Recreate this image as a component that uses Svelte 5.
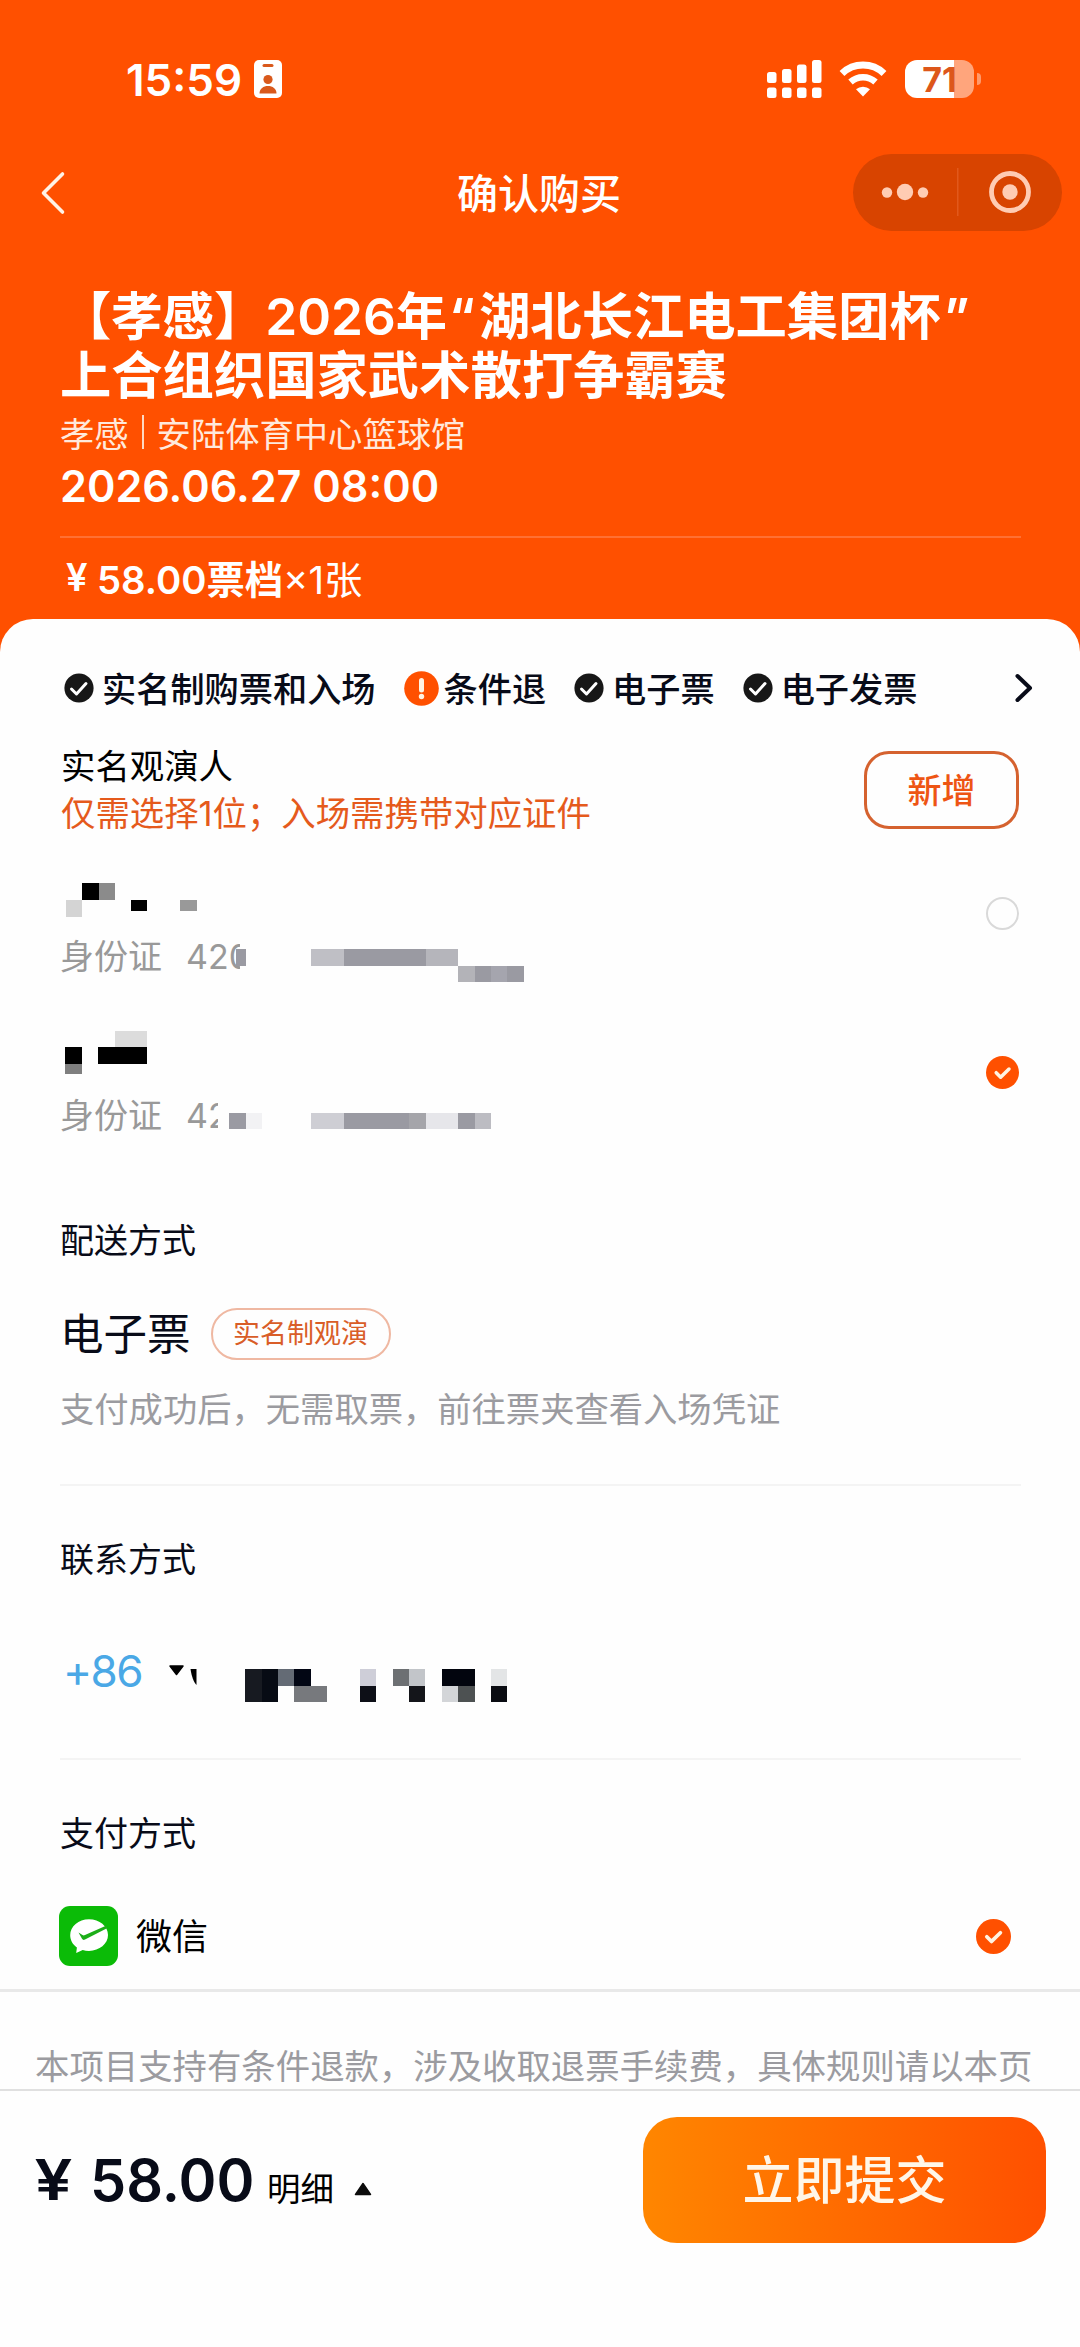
<script>
    const badges = [
        {text: '实名制购票和入场', warn: false},
        {text: '条件退', warn: true},
        {text: '电子票', warn: false},
        {text: '电子发票', warn: false}
    ]

    // mask blocks: [x, y, width, height, color], relative to their own row
    const people = [
        {
            number: '420',
            mask: [
                [22, 46, 17, 17, '#000'], [39, 46, 16, 17, '#8b8b8b'], [6, 63, 16, 17, '#d4d4d4'],
                [71, 63, 16, 11, '#000'], [120, 63, 17, 11, '#999'],
                [180, 100, 30, 38, '#fefefe'], [176, 112, 10, 17, '#9a9aa2'],
                [251, 112, 33, 17, '#bfbfc5'], [284, 112, 82, 17, '#9a9aa2'], [366, 112, 32, 17, '#b5b5bb'],
                [398, 129, 17, 16, '#b3b3b8'], [415, 129, 16, 16, '#9a9aa2'], [431, 129, 16, 16, '#a5a5ae'], [447, 129, 17, 16, '#9a9aa2']
            ]
        },
        {
            number: '42',
            mask: [
                [55, 35, 32, 16, '#dcdcdc'], [5, 51, 17, 17, '#000'], [38, 51, 49, 17, '#000'], [5, 68, 17, 10, '#7f7f7f'],
                [155, 112, 10, 11, '#fefefe'], [158, 100, 20, 38, '#fefefe'],
                [169, 117, 17, 16, '#9a9aa2'], [186, 117, 16, 16, '#f2f2f4'],
                [251, 117, 33, 16, '#ceced4'], [284, 117, 65, 16, '#9a9aa2'], [349, 117, 17, 16, '#a5a5aa'],
                [366, 117, 32, 16, '#e6e6ea'], [398, 117, 17, 16, '#9a9aa2'], [415, 117, 16, 16, '#bcbcc2']
            ]
        }
    ]

    const phoneMask = [
        [0, 0, 17, 33, '#171a21'], [17, 0, 16, 33, '#070b14'], [33, 0, 16, 17, '#646b75'], [49, 0, 17, 17, '#020614'], [49, 17, 33, 16, '#77797d'],
        [115, 0, 16, 17, '#ceced8'], [115, 17, 16, 16, '#0d0f17'],
        [148, 0, 16, 17, '#6d7073'], [164, 0, 16, 17, '#c2c5c9'], [164, 17, 16, 16, '#14151a'],
        [197, 0, 33, 17, '#02050e'], [197, 17, 16, 16, '#d3d5d8'], [213, 17, 17, 16, '#4d5152'],
        [246, 0, 16, 17, '#e3e5e6'], [246, 17, 16, 16, '#0a0c12']
    ]

    let selected = $state(1)
</script>

{#snippet check(size)}
    <svg width={size} height={size} viewBox="0 0 34 34">
        <circle cx="17" cy="17" r="17" fill="#ff5000" />
        <path d="M10.500 17.200l4.600 4.600 8.600-8.400" fill="none" stroke="#fff3e2" stroke-width="3.600" stroke-linecap="round" stroke-linejoin="round" />
    </svg>
{/snippet}

<main>
    <header>
        <div class="status">
            <span class="time">15:59</span>
            <svg class="idcard" width="28" height="38" viewBox="0 0 28 38">
                <rect width="28" height="38" rx="5" fill="#fff" />
                <rect x="8.500" y="4" width="11" height="3" rx="1.500" fill="#d9591c" />
                <circle cx="14" cy="19.500" r="4.600" fill="#d9591c" />
                <path d="M5.500 33.500c0-5 4-7.500 8.500-7.500s8.500 2.500 8.500 7.500z" fill="#d9591c" />
            </svg>
            <svg class="signal" width="55" height="38" viewBox="0 0 55 38" fill="#fff">
                <rect x="0" y="12" width="9.500" height="11" rx="2.500" />
                <rect x="15" y="9" width="9.500" height="14" rx="2.500" />
                <rect x="30" y="4.500" width="9.500" height="18.500" rx="2.500" />
                <rect x="45" y="0" width="9.500" height="23" rx="2.500" />
                <rect x="0" y="27.500" width="9.500" height="10.500" rx="2.500" />
                <rect x="15" y="27.500" width="9.500" height="10.500" rx="2.500" />
                <rect x="30" y="27.500" width="9.500" height="10.500" rx="2.500" />
                <rect x="45" y="27.500" width="9.500" height="10.500" rx="2.500" />
            </svg>
            <svg class="wifi" width="48" height="36" viewBox="0 0 48 36">
                <path d="M3 12.500a30.500 30.500 0 0 1 42 0" fill="none" stroke="#fff" stroke-width="7" />
                <path d="M11.500 21a18.500 18.500 0 0 1 25 0" fill="none" stroke="#fff" stroke-width="6.500" />
                <path d="M24 35.500l-7-7.200a10.500 10.500 0 0 1 14 0z" fill="#fff" />
            </svg>
            <div class="battery"><span>71</span></div>
            <i class="cap"></i>
        </div>

        <nav>
            <svg class="back" width="26" height="44" viewBox="0 0 26 44">
                <path d="M22.500 3L3.500 22l19 19" fill="none" stroke="#fff3e6" stroke-width="3.600" stroke-linecap="round" stroke-linejoin="round" />
            </svg>
            <h1>确认购买</h1>
            <div class="capsule">
                <svg width="209" height="77" viewBox="0 0 209 77" fill="#ffccb3">
                    <circle cx="34" cy="38.500" r="5.200" />
                    <circle cx="52" cy="38" r="8.200" />
                    <circle cx="70" cy="38.500" r="5.200" />
                    <rect x="104" y="14" width="1.500" height="48" fill="#e2591c" />
                    <circle cx="157" cy="38" r="18.500" fill="none" stroke="#ffccb3" stroke-width="4.800" />
                    <circle cx="157" cy="38" r="7.700" />
                </svg>
            </div>
        </nav>

        <div class="event">
            <h2>【孝感】2026年<q>湖北长江电工集团杯</q><br>上合组织国家武术散打争霸赛</h2>
            <p class="venue">孝感 <i></i> 安陆体育中心篮球馆</p>
            <p class="date">2026.06.27 08:00</p>
            <p class="tier"><span class="yen">¥</span><b>58.00票档</b><span>×1张</span></p>
        </div>
    </header>

    <div class="sheet">
        <div class="badges">
            {#each badges as badge}
                <div class="badge" class:warn={badge.warn}>
                    {#if badge.warn}
                        <svg width="35" height="35" viewBox="0 0 35 35">
                            <circle cx="17.500" cy="17.500" r="17.300" fill="#ff5000" />
                            <path d="M17.500 9.500v9.500" stroke="#fff3e2" stroke-width="5" stroke-linecap="round" />
                            <circle cx="17.500" cy="25.500" r="2.700" fill="#fff3e2" />
                        </svg>
                    {:else}
                        <svg width="30" height="30" viewBox="0 0 30 30">
                            <circle cx="15" cy="15" r="14.600" fill="#171717" />
                            <path d="M7.500 16l5 5 9.500-10.500" fill="none" stroke="#fff" stroke-width="3" stroke-linecap="round" stroke-linejoin="round" />
                        </svg>
                    {/if}
                    <span>{badge.text}</span>
                </div>
            {/each}
            <svg class="more" width="18" height="30" viewBox="0 0 18 30">
                <path d="M2.500 3L15 15 2.500 27" fill="none" stroke="#080b18" stroke-width="4" stroke-linecap="round" stroke-linejoin="round" />
            </svg>
        </div>

        <div class="viewer">
            <div>
                <h3>实名观演人</h3>
                <p>仅需选择1位；入场需携带对应证件</p>
            </div>
            <button class="add">新增</button>
        </div>

        {#each people as person, i}
            <div class="person">
                <div class="idline">身份证<span>{person.number}</span></div>
                <svg class="mask" width="480" height="159" viewBox="0 0 480 159" shape-rendering="crispEdges">
                    {#each person.mask as [x, y, w, h, color]}
                        <rect {x} {y} width={w} height={h} fill={color} />
                    {/each}
                </svg>
                <button class="radio" aria-label="选择" onclick={() => selected = i}>
                    {#if selected === i}
                        {@render check(33)}
                    {:else}
                        <i></i>
                    {/if}
                </button>
            </div>
        {/each}

        <section class="delivery">
            <h3>配送方式</h3>
            <div class="ticket">
                <strong>电子票</strong>
                <span class="tag">实名制观演</span>
            </div>
            <p>支付成功后，无需取票，前往票夹查看入场凭证</p>
        </section>

        <section class="contact">
            <h3>联系方式</h3>
            <div class="phone">
                <span>+86</span>
                <svg class="drop" width="30" height="22" viewBox="0 0 30 22">
                    <path d="M2 2h13l-6.500 8.500z" stroke="#000" stroke-width="1.500" stroke-linejoin="round" />
                    <path d="M22.500 5h6v16c-3-3-5-9-6-16z" />
                </svg>
                <svg class="digits" width="262" height="33" viewBox="0 0 262 33" shape-rendering="crispEdges">
                    {#each phoneMask as [x, y, w, h, color]}
                        <rect {x} {y} width={w} height={h} fill={color} />
                    {/each}
                </svg>
            </div>
        </section>

        <section class="payment">
            <h3>支付方式</h3>
            <div class="wechat">
                <svg width="59" height="60" viewBox="0 0 59 60">
                    <rect width="59" height="60" rx="11" fill="#0bbb07" />
                    <path d="M30 13.300c-10.500 0-18.800 7-18.800 16 0 5 2.600 9.300 6.700 12.200l-.7 5.500 6.500-3c2 .6 4 .9 6.300.9 10.500 0 19-7 19-15.800s-8.500-15.800-19-15.800z" fill="#fff" />
                    <path d="M19.500 26.500l4 2.500c1 .6 1.500.5 2.500 0L47.500 19.500 48.500 22 26 33.500c-1.200.7-2.300.5-3-.7z" fill="#1cae18" />
                </svg>
                <span>微信</span>
                {@render check(35)}
            </div>
        </section>

        <div class="notice">本项目支持有条件退款，涉及收取退票手续费，具体规则请以本页</div>

        <footer>
            <span class="sign">¥</span>
            <span class="total">58.00</span>
            <span class="detail">明细</span>
            <svg width="18" height="14" viewBox="0 0 18 14">
                <path d="M9 1.500L16.500 12.500h-15z" fill="#0c0c0c" stroke="#0c0c0c" stroke-width="1.500" stroke-linejoin="round" />
            </svg>
            <button>立即提交</button>
        </footer>
    </div>
</main>

<style>
    :global(body) {
        margin: 0;
    }

    main {
        display: flex;
        flex-direction: column;
        width: 1080px;
        height: 2347px;
        overflow: hidden;
        background: #ff5000;
        font-family: Inter, 'Noto Sans CJK SC', sans-serif;
        color: #080b18;
    }

    h1, h2, h3, p {
        margin: 0;
        font-weight: 400;
    }

    svg {
        display: block;
        flex: none;
    }

    button {
        padding: 0;
        border: 0;
        background: none;
        font-family: inherit;
    }

    header {
        height: 619px;
        color: #fff;
    }

    .status {
        display: flex;
        align-items: center;
        height: 118px;
        padding: 20px 0 0 126px;
    }

    .time {
        width: 128px;
        padding-top: 2px;
        font-size: 44px;
        font-weight: 600;
    }

    .signal {
        margin-left: 485px;
    }

    .wifi {
        margin-left: 17px;
    }

    .battery {
        width: 69px;
        height: 38px;
        margin-left: 18px;
        border-radius: 12px;
        background: linear-gradient(90deg, #fff 49px, #ffa57c 49px);
        color: #dd571a;
        font-size: 34px;
        font-weight: 700;
        line-height: 39px;
        text-align: center;
    }

    .cap {
        width: 4px;
        height: 12px;
        margin-left: 3px;
        border-radius: 0 6px 6px 0;
        background: #ff9a6c;
    }

    nav {
        display: flex;
        align-items: center;
        height: 109px;
        padding: 0 18px 1px 40px;
    }

    h1 {
        margin-left: 391px;
        padding-bottom: 4px;
        font-size: 41px;
        font-weight: 500;
    }

    .capsule {
        margin-left: auto;
        border-radius: 39px;
        background: #d84400;
    }

    .event {
        padding: 39px 59px 0 60px;
    }

    h2 {
        font-size: 51.3px;
        font-weight: 600;
        line-height: 59px;
        white-space: nowrap;
    }

    q {
        quotes: '“' '”';
    }

    q::before {
        margin: 0 4px 0 2px;
    }

    q::after {
        margin-left: 3px;
    }

    .venue {
        display: flex;
        align-items: center;
        gap: 13px;
        height: 54px;
        padding-bottom: 4px;
        font-size: 34.3px;
        color: #ffe9dc;
    }

    .venue i {
        width: 2px;
        height: 34px;
        background: #ffd9c2;
    }

    .date {
        padding-bottom: 26px;
        border-bottom: 2px solid #ff7033;
        font-size: 43.2px;
        font-weight: 600;
        line-height: 47px;
    }

    .tier {
        display: flex;
        align-items: center;
        height: 78px;
        padding: 0 0 4px 6px;
        font-size: 38.3px;
    }

    .tier b, .yen {
        font-weight: 600;
    }

    .yen {
        width: 31px;
    }

    .sheet {
        display: flex;
        flex-direction: column;
        flex: 1;
        border-radius: 33px 33px 0 0;
        background: #fefefe;
    }

    .badges {
        display: flex;
        align-items: center;
        height: 70px;
        padding: 34px 47px 0 64px;
        font-size: 34.2px;
        font-weight: 500;
    }

    .badge {
        display: flex;
        align-items: center;
        gap: 8px;
        margin-right: 28px;
    }

    .badge span {
        padding-bottom: 3px;
    }

    .badge.warn {
        gap: 5px;
    }

    .more {
        margin-left: auto;
    }

    .viewer {
        display: flex;
        align-items: center;
        justify-content: space-between;
        height: 94px;
        margin-top: 20px;
        padding: 0 61px;
        font-size: 34.4px;
        line-height: 47px;
    }

    h3 {
        padding-top: 1px;
        font-size: 34px;
        line-height: 47px;
    }

    .viewer h3 {
        font-size: 34.4px;
        line-height: 46px;
        color: #000;
    }

    .viewer p {
        color: #e55a1c;
    }

    .add {
        box-sizing: border-box;
        width: 155px;
        height: 78px;
        padding-bottom: 4px;
        border: 3px solid #d5622f;
        border-radius: 25px;
        color: #ee5514;
        font-size: 34px;
        font-weight: 500;
    }

    .person {
        position: relative;
        display: flex;
        justify-content: space-between;
        height: 159px;
        padding: 0 61px 0 60px;
    }

    .idline {
        align-self: flex-end;
        padding-bottom: 15px;
        color: #999;
        font-size: 34px;
        line-height: 48px;
    }

    .idline span {
        margin-left: 24px;
    }

    .mask {
        position: absolute;
        left: 60px;
        top: 0;
    }

    .radio {
        align-self: flex-start;
        margin-top: 60px;
    }

    .radio i {
        display: block;
        box-sizing: border-box;
        width: 33px;
        height: 33px;
        border: 2px solid #d9d9d9;
        border-radius: 50%;
    }

    section {
        margin: 0 59px 0 60px;
    }

    .delivery {
        padding: 61px 0 50px;
        border-bottom: 2px solid #f4f4f4;
    }

    .ticket {
        display: flex;
        align-items: center;
        gap: 20px;
        height: 73px;
        margin: 33px 0 16px;
    }

    .ticket strong {
        padding-bottom: 4px;
        font-size: 43.5px;
        font-weight: 400;
    }

    .tag {
        box-sizing: border-box;
        width: 180px;
        height: 52px;
        border: 2px solid #efb8a2;
        border-radius: 26px;
        color: #d95d28;
        font-size: 27px;
        line-height: 47px;
        text-align: center;
    }

    .delivery p {
        color: #9b9ba0;
        font-size: 34.3px;
        line-height: 48px;
        white-space: nowrap;
    }

    .contact {
        padding: 49px 0 47px;
        border-bottom: 2px solid #f4f4f4;
    }

    .phone {
        display: flex;
        align-items: center;
        height: 80px;
        margin-top: 48px;
        padding-left: 3px;
    }

    .phone span {
        width: 104px;
        color: #4aa8e6;
        font-size: 44px;
        letter-spacing: -1.5px;
    }

    .drop {
        margin: 8px 0 0 1px;
    }

    .digits {
        margin: 29px 0 0 47px;
    }

    .payment {
        padding-top: 49px;
    }

    .wechat {
        display: flex;
        align-items: center;
        height: 60px;
        margin: 49px 0 0 -1px;
        padding-right: 10px;
        color: #000;
        font-size: 36px;
    }

    .wechat span {
        flex: 1;
        margin-left: 18px;
        padding-bottom: 4px;
    }

    .notice {
        height: 46px;
        margin-top: 23px;
        padding: 51px 36px 0 35px;
        border-top: 3px solid #e9e9e9;
        border-bottom: 2px solid #e0e0e0;
        color: #9b9ba0;
        font-size: 34.4px;
        line-height: 48px;
        white-space: nowrap;
    }

    footer {
        display: flex;
        align-items: center;
        height: 177px;
        padding: 0 34px 0 35px;
    }

    .sign {
        width: 55px;
        font-size: 56px;
        font-weight: 600;
        transform: scaleX(1.2);
        transform-origin: 3px;
    }

    .total {
        width: 177px;
        font-size: 57.5px;
        font-weight: 600;
    }

    .detail {
        width: 87px;
        margin-top: 13px;
        color: #000;
        font-size: 33.5px;
    }

    footer svg {
        margin-top: 19px;
    }

    footer button {
        width: 403px;
        height: 126px;
        padding-bottom: 5px;
        margin-left: auto;
        border-radius: 34px;
        background: linear-gradient(90deg, #ff8600, #ff5000);
        color: #fff6e8;
        font-size: 51px;
        font-weight: 500;
    }
</style>
